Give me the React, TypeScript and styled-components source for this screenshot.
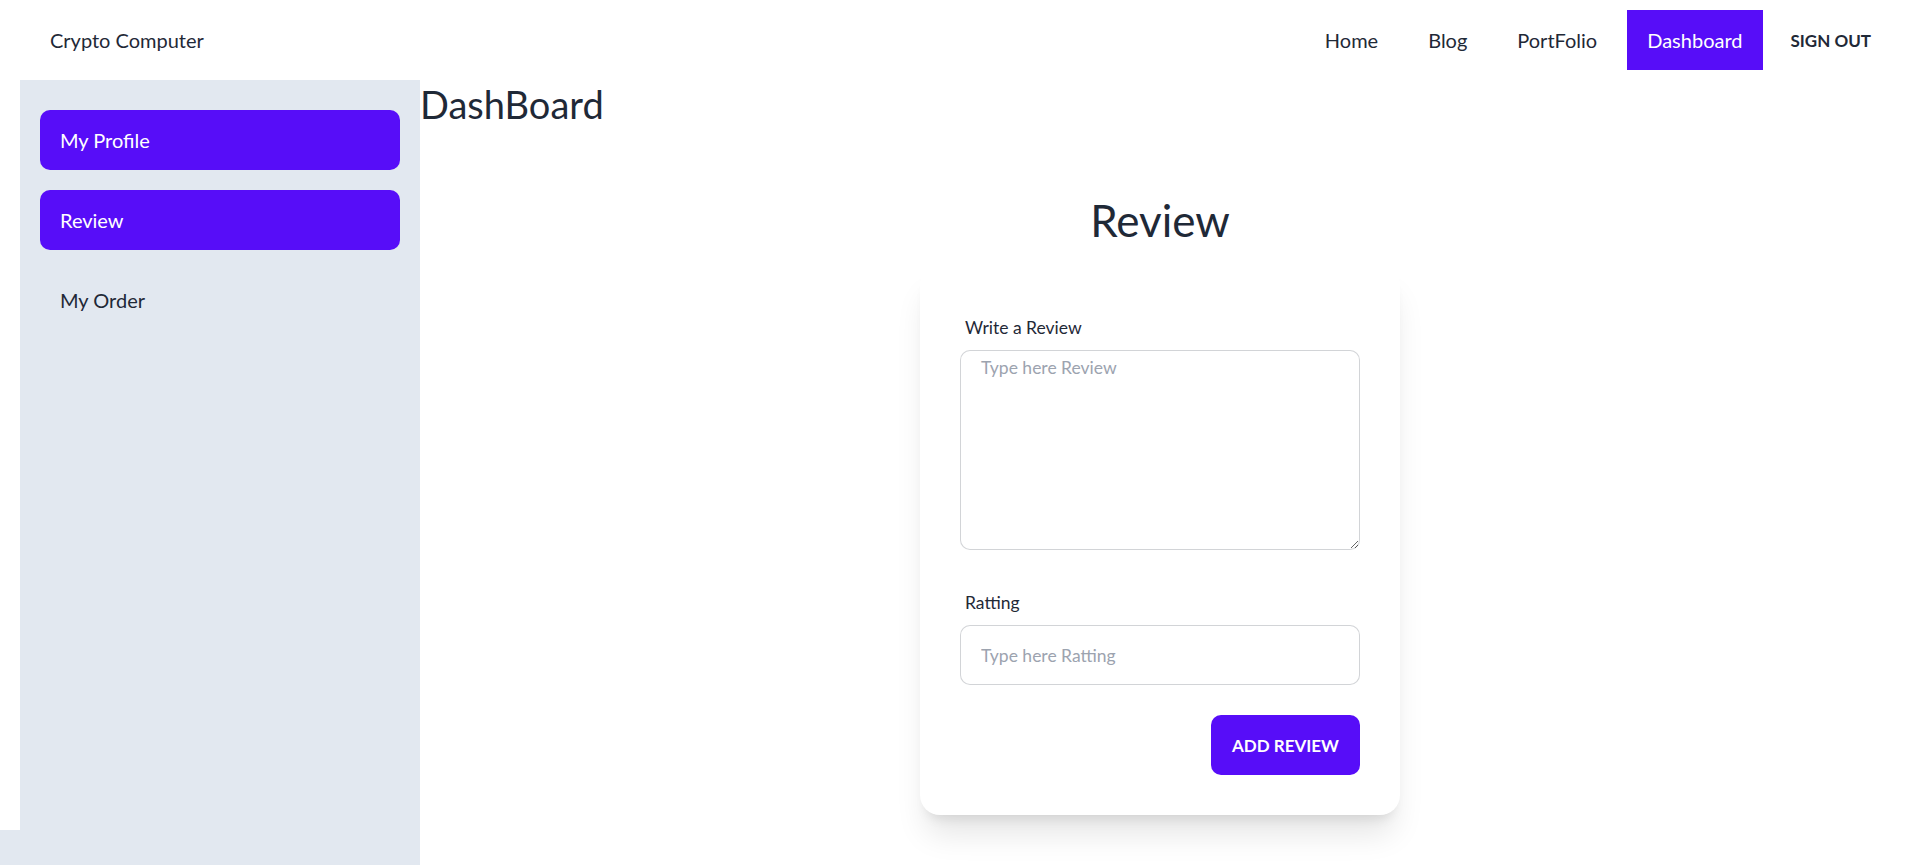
import styled, { createGlobalStyle } from "styled-components"

const GlobalStyle = createGlobalStyle`
    * {
        box-sizing: border-box;
    }
    body {
        margin: 0;
        font-family: 'Lato', 'Noto Sans', sans-serif;
        color: #1f2937;
        background: #ffffff;
    }
`

const Page = styled.div`
    height: 100vh;
    display: flex;
    flex-direction: column;
    overflow: hidden;
`

const Nav = styled.nav`
    flex: 0 0 80px;
    display: flex;
    align-items: center;
    justify-content: space-between;
    padding: 0 29px 0 30px;
`

const Logo = styled.a`
    font-size: 20px;
    padding: 0 20px;
    line-height: 60px;
    color: #1f2937;
`

const NavList = styled.ul`
    display: flex;
    align-items: center;
    gap: 10px;
    list-style: none;
    margin: 0;
    padding: 0;
`

const NavItem = styled.li<{ $active?: boolean }>`
    height: 60px;
    line-height: 60px;
    padding: 0 20px;
    font-size: 20px;
    background: ${p => p.$active ? "#570df8" : "transparent"};
    color: ${p => p.$active ? "#ffffff" : "#1f2937"};
`

const SignOut = styled.button`
    height: 60px;
    margin-left: -2px;
    padding: 0 20px;
    border: none;
    background: transparent;
    font-family: inherit;
    font-size: 17px;
    font-weight: 700;
    text-transform: uppercase;
    color: #1f2937;
`

const Body = styled.div`
    flex: 1;
    display: flex;
    min-height: 0;
`

const LeftCol = styled.div`
    width: 420px;
    display: flex;
    flex-direction: column;
`

const Sidebar = styled.aside`
    flex: 0 0 750px;
    margin-left: 20px;
    background: #e2e8f0;
    padding: 30px 20px;
    display: flex;
    flex-direction: column;
    gap: 20px;
`

const SideFill = styled.div`
    flex: 1;
    background: #e2e8f0;
`

const SideLink = styled.a<{ $active?: boolean }>`
    height: 60px;
    display: flex;
    align-items: center;
    padding: 0 20px;
    border-radius: 10px;
    font-size: 20px;
    background: ${p => p.$active ? "#570df8" : "transparent"};
    color: ${p => p.$active ? "#ffffff" : "#1f2937"};
`

const Main = styled.main`
    flex: 1;
    padding-right: 20px;
`

const H1 = styled.h1`
    margin: 0;
    font-size: 38px;
    font-weight: 400;
    line-height: 48px;
`

const Section = styled.section`
    display: flex;
    flex-direction: column;
    align-items: center;
`

const Title = styled.h2`
    margin: 67px 0 0;
    font-size: 44px;
    font-weight: 400;
    line-height: 50px;
`

const Card = styled.form`
    margin-top: 20px;
    width: 480px;
    padding: 40px;
    background: #ffffff;
    border-radius: 20px;
    box-shadow: 0 25px 31px -6px rgba(0, 0, 0, 0.1), 0 10px 12px -7px rgba(0, 0, 0, 0.1);
    display: flex;
    flex-direction: column;
`

const Label = styled.label`
    display: block;
    padding: 10px 5px;
    font-size: 17.5px;
    line-height: 25px;
`

const Field = styled.div<{ $gap?: number }>`
    margin-top: ${p => p.$gap || 0}px;
`

const TextArea = styled.textarea`
    display: block;
    width: 100%;
    height: 200px;
    padding: 6px 20px;
    border: 1px solid rgba(31, 41, 55, 0.2);
    border-radius: 10px;
    font-family: inherit;
    font-size: 17.5px;
    line-height: 1.2;
    color: #1f2937;
    resize: vertical;
    &::placeholder {
        color: #9ca3af;
    }
`

const Input = styled.input`
    display: block;
    width: 100%;
    height: 60px;
    padding: 0 20px;
    border: 1px solid rgba(31, 41, 55, 0.2);
    border-radius: 10px;
    font-family: inherit;
    font-size: 17.5px;
    color: #1f2937;
    &::placeholder {
        color: #9ca3af;
    }
`

const Actions = styled.div`
    margin-top: 30px;
    display: flex;
    justify-content: flex-end;
`

const Button = styled.button`
    height: 60px;
    padding: 0 21px;
    border: none;
    border-radius: 10px;
    background: #570df8;
    color: #ffffff;
    font-family: inherit;
    font-size: 17px;
    font-weight: 700;
    text-transform: uppercase;
`

const navLinks = ["Home", "Blog", "PortFolio", "Dashboard"]
const sideLinks = [
    { label: "My Profile", active: true },
    { label: "Review", active: true },
    { label: "My Order", active: false },
]

const App = () => {
    return (
        <Page>
            <GlobalStyle />
            <Nav>
                <Logo>Crypto Computer</Logo>
                <NavList>
                    {navLinks.map(l => <NavItem key={l} $active={l === "Dashboard"}>{l}</NavItem>)}
                    <li><SignOut>Sign Out</SignOut></li>
                </NavList>
            </Nav>
            <Body>
                <LeftCol>
                    <Sidebar>
                        {sideLinks.map(s => <SideLink key={s.label} $active={s.active}>{s.label}</SideLink>)}
                    </Sidebar>
                    <SideFill />
                </LeftCol>
                <Main>
                    <H1>DashBoard</H1>
                    <Section>
                        <Title>Review</Title>
                        <Card onSubmit={e => e.preventDefault()}>
                            <Field>
                                <Label>Write a Review</Label>
                                <TextArea placeholder="Type here Review" />
                            </Field>
                            <Field $gap={30}>
                                <Label>Ratting</Label>
                                <Input placeholder="Type here Ratting" />
                            </Field>
                            <Actions>
                                <Button type="submit">Add Review</Button>
                            </Actions>
                        </Card>
                    </Section>
                </Main>
            </Body>
        </Page>
    )
}

export default App
